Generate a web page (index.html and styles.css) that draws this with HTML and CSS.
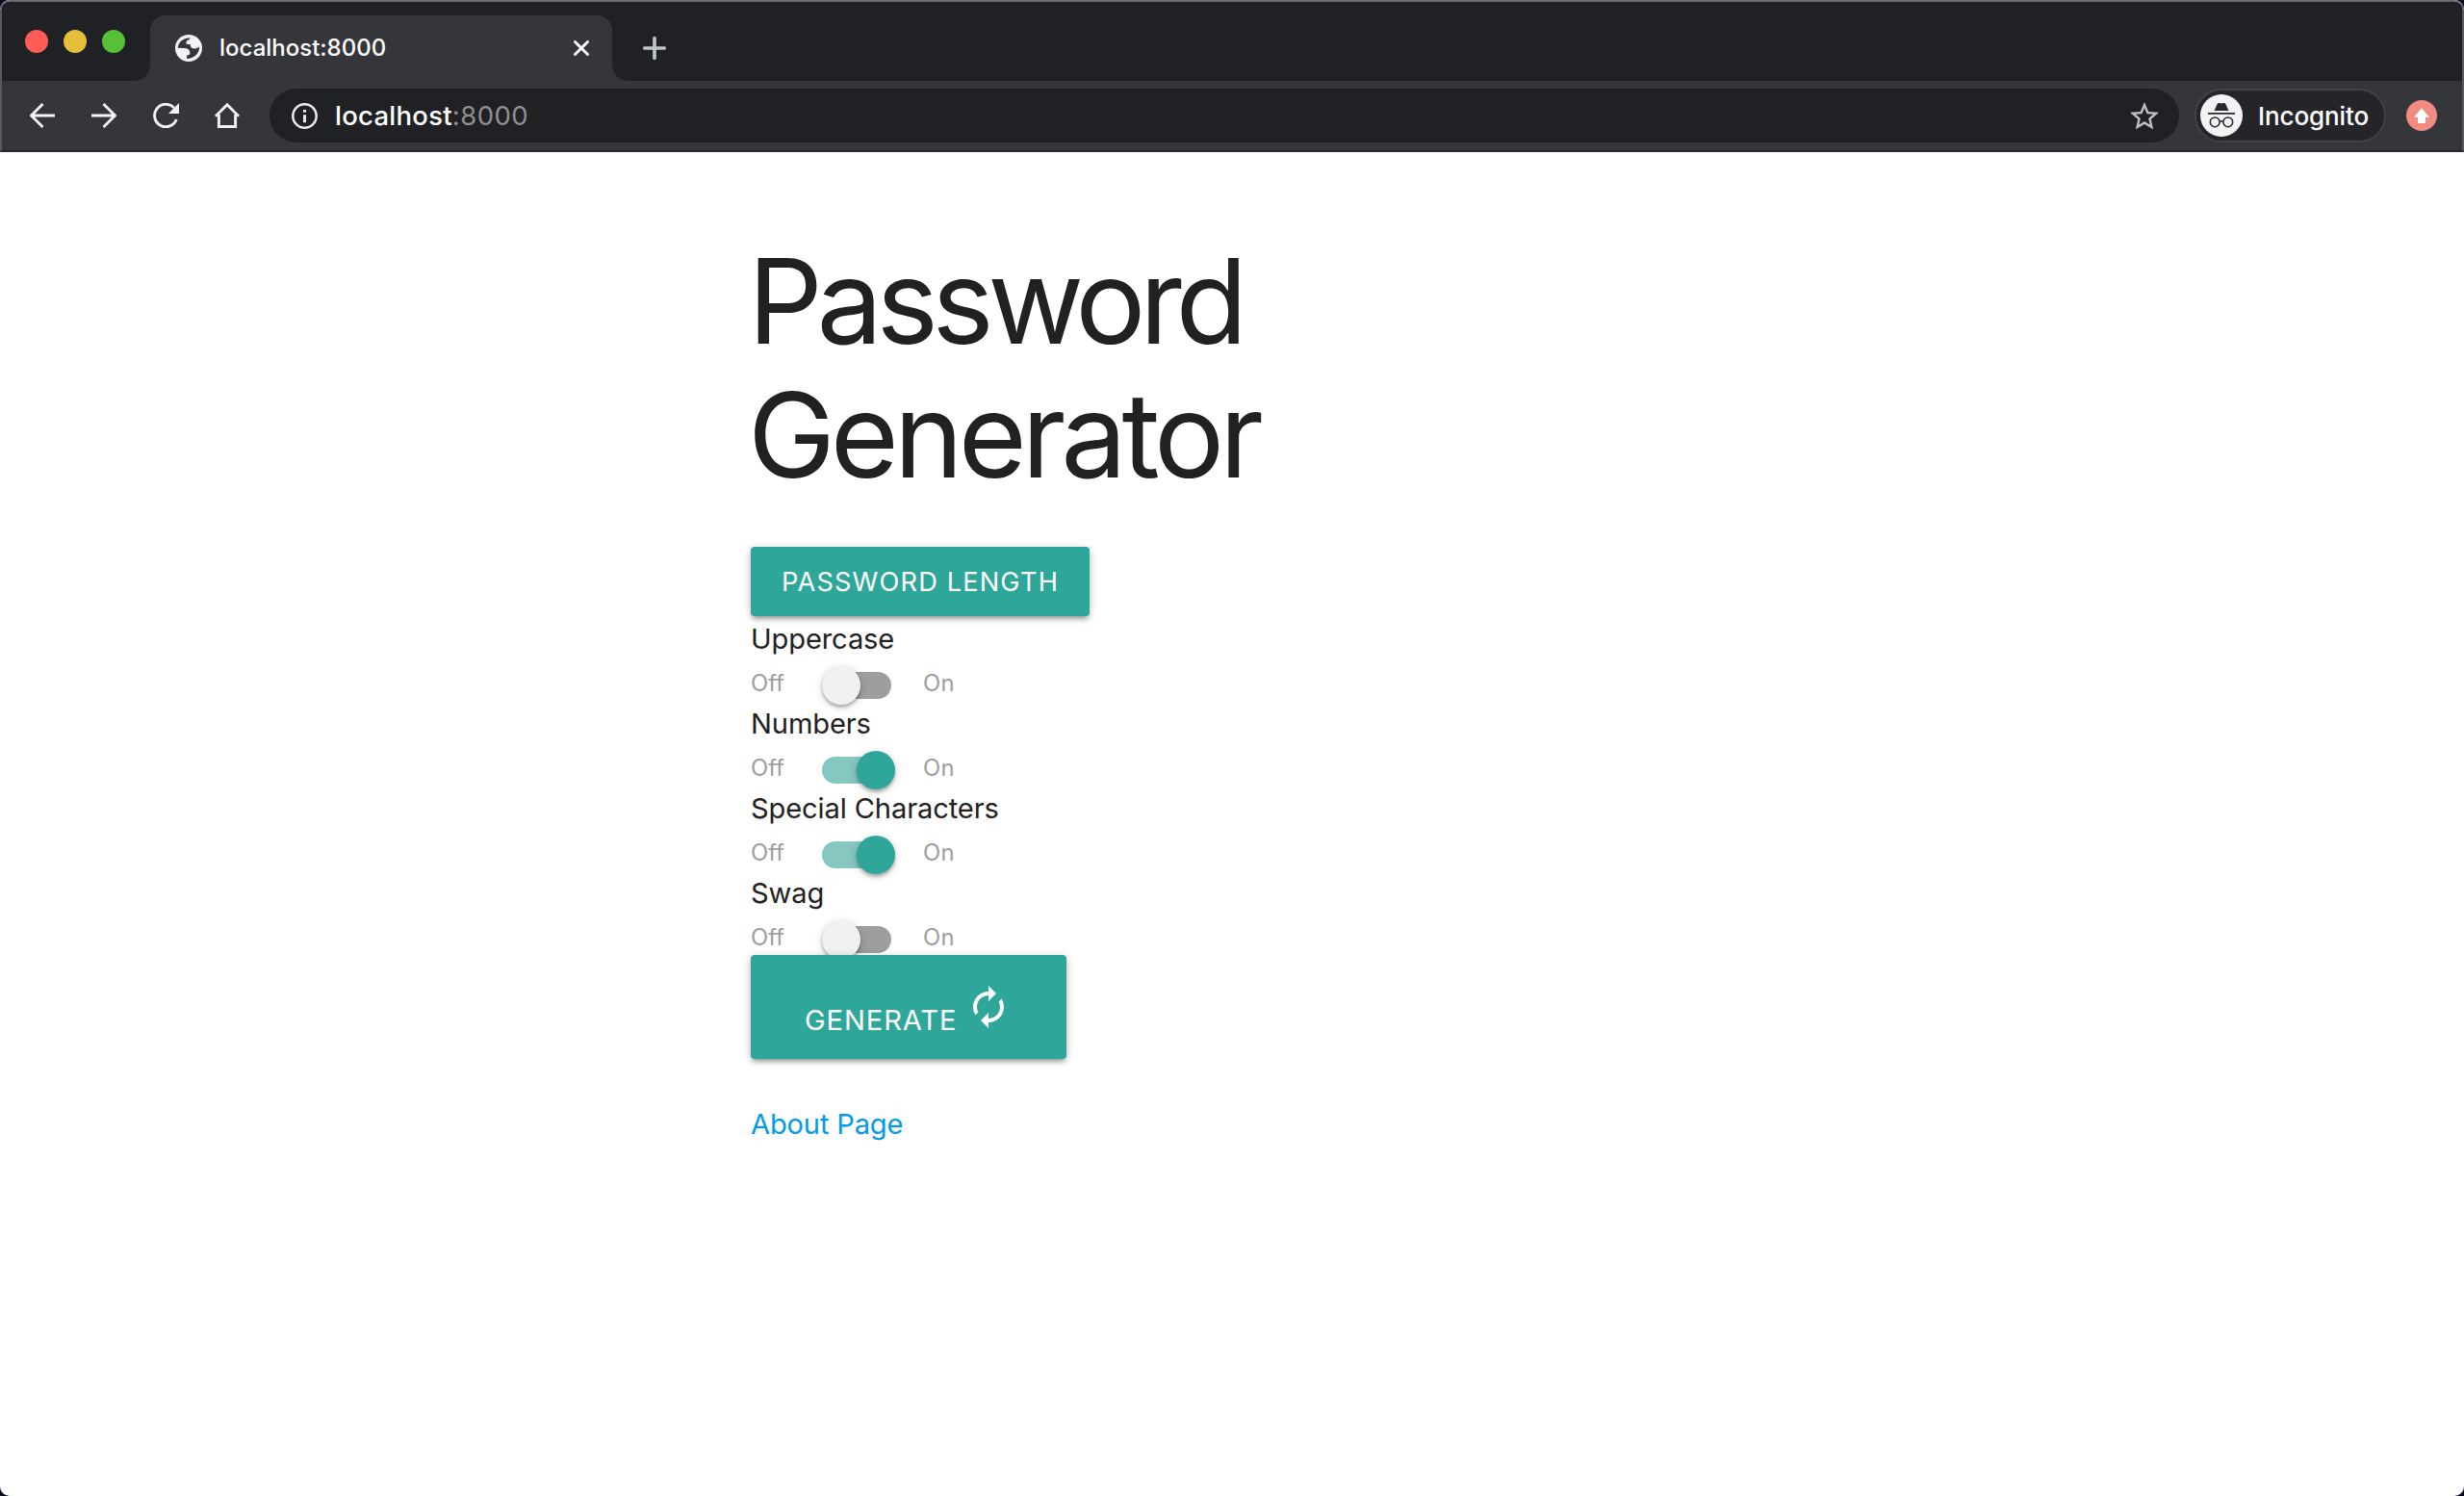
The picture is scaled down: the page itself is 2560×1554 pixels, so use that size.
FILE: index.html
```html
<!DOCTYPE html>
<html lang="en">
<head>
<meta charset="utf-8">
<title>Password Generator</title>
<link rel="stylesheet" href="styles.css">
</head>
<body>
<div class="window">
  <header class="chrome">
    <div class="tabstrip">
      <div class="lights">
        <span class="light light-red"></span>
        <span class="light light-yellow"></span>
        <span class="light light-green"></span>
      </div>
      <div class="tab">
        <svg class="globe" viewBox="0 0 28 28" width="28" height="28"><circle cx="14" cy="14" r="14" fill="#f1f3f4"/><path fill="#35363a" d="M2.800 13.800C2.900 8 8 3.500 15.800 3.200L14.500 5.200C12 5.600 11 7.300 11.600 9.800L15.800 10.300C15.600 13.400 17.600 14.600 20.400 14.600 22.400 14.600 23.500 13.800 25.200 12.600 25.400 19 20.500 24.800 12.200 25.100L11.900 21.600C14.800 21.500 15.700 20.400 15.300 18 14.900 15 12 14 9 14z"/></svg>
        <span class="tab-title">localhost:8000</span>
        <svg class="tab-close" viewBox="0 0 16 16" width="16" height="16"><path d="M1.500 1.500l13 13M14.500 1.500l-13 13" stroke="#fff" stroke-width="2.900" stroke-linecap="round"/></svg>
      </div>
      <svg class="new-tab" viewBox="0 0 24 24" width="24" height="24"><path d="M12 1.800v20.400M1.800 12h20.400" stroke="#c0c3c7" stroke-width="3.700" stroke-linecap="round"/></svg>
    </div>
    <div class="toolbar">
      <nav class="nav">
        <svg viewBox="0 0 26 26" width="26" height="26" fill="none" stroke="#f1f3f4" stroke-width="2.900"><path d="M26 13H2M13.500 1L1.500 13l12 12"/></svg>
        <svg viewBox="0 0 26 26" width="26" height="26" fill="none" stroke="#f1f3f4" stroke-width="2.900"><path d="M0 13h24M12.500 1l12 12-12 12"/></svg>
        <svg viewBox="0 0 27 26" width="27" height="26"><path d="M21.800 5A11.700 11.700 0 1 0 24.300 17" fill="none" stroke="#f1f3f4" stroke-width="2.900"/><path d="M27 0v11H16z" fill="#f1f3f4"/></svg>
        <svg class="home" viewBox="0 0 26 26" width="26" height="26" fill="none" stroke="#f1f3f4" stroke-width="2.900"><path d="M1 13.700L13 1.800l12 11.900M4.400 12v12.500h17.200V12"/></svg>
      </nav>
      <div class="omnibox">
        <svg class="info" viewBox="0 0 27 27" width="27" height="27"><circle cx="13.500" cy="13.500" r="12.200" fill="none" stroke="#e8eaed" stroke-width="2.500"/><path d="M12 7h3v2.800h-3zM12 12.200h3V20.200h-3z" fill="#e8eaed"/></svg>
        <span class="host">localhost</span><span class="port">:8000</span>
        <svg class="star" viewBox="2 2 20 19" width="30" height="28.500"><path fill="#bdbfc1" d="M22 9.240l-7.190-.620L12 2 9.190 8.630 2 9.240l5.460 4.730L5.820 21 12 17.270 18.180 21l-1.630-7.030L22 9.240zM12 15.400l-3.760 2.270 1-4.280-3.320-2.880 4.380-.380L12 6.100l1.710 4.040 4.380.380-3.320 2.880 1 4.280L12 15.400z"/></svg>
      </div>
      <div class="incognito">
        <svg viewBox="0 0 44 44" width="44" height="44"><circle cx="22" cy="22" r="22" fill="#f1f3f4"/><g fill="#27292d"><path d="M14.500 17l3.300-7.200c.500-1 1.300-1.100 2.200-.7 1.400.6 2.600.6 4 0 .9-.4 1.700-.3 2.200.7L29.500 17z"/><path d="M8 19h28v1.700H8z"/></g><g fill="none" stroke="#27292d" stroke-width="1.500"><circle cx="15.200" cy="28.800" r="4.900"/><circle cx="28.800" cy="28.800" r="4.900"/><path d="M20.100 28.300c1.200-.7 2.600-.7 3.800 0"/></g></svg>
        <span>Incognito</span>
      </div>
      <svg class="update" viewBox="0 0 32 32" width="32" height="32"><circle cx="16" cy="16" r="16" fill="#f28b82"/><path d="M16 8.300L24 17.700h-4V24h-8v-6.300H8z" fill="#fff"/></svg>
    </div>
  </header>
  <main class="page">
    <h1 class="title"><span class="title-top">Password</span><br><span class="title-bottom">Generator</span></h1>
    <button class="btn">Password Length</button>
    <section class="option">
      <div class="name">Uppercase</div>
      <div class="switch"><span>Off</span><i class="lever"></i><span>On</span></div>
    </section>
    <section class="option">
      <div class="name">Numbers</div>
      <div class="switch"><span>Off</span><i class="lever is-on"></i><span>On</span></div>
    </section>
    <section class="option">
      <div class="name">Special Characters</div>
      <div class="switch"><span>Off</span><i class="lever is-on"></i><span>On</span></div>
    </section>
    <section class="option">
      <div class="name">Swag</div>
      <div class="switch"><span>Off</span><i class="lever"></i><span>On</span></div>
    </section>
    <button class="btn btn-large"><span>Generate</span><svg viewBox="0 0 24 24" width="48" height="48"><path fill="#fff" d="M12 6v3l4-4-4-4v3c-4.420 0-8 3.580-8 8 0 1.570.460 3.030 1.240 4.260L6.700 14.800c-.450-.830-.700-1.790-.700-2.800 0-3.310 2.690-6 6-6zm6.760 1.740L17.300 9.200c.440.840.700 1.790.700 2.800 0 3.310-2.690 6-6 6v-3l-4 4 4 4v-3c4.420 0 8-3.580 8-8 0-1.570-.460-3.030-1.240-4.260z"/></svg></button>
    <a class="about" href="#">About Page</a>
  </main>
</div>
</body>
</html>
```
FILE: styles.css
```css
* { box-sizing: border-box; }
html { background: #070b1c; }
body {
  margin: 0;
  font-family: Inter, "Liberation Sans", sans-serif;
  color: #212121;
}
svg { display: block; flex: none; }

.window {
  height: 1554px;
  overflow: hidden;
  border-radius: 10px;
  background: #fff;
}

/* Browser chrome */
.chrome {
  height: 158px;
  background: #35363a;
  border: 2px solid #58595c;
  border-top-color: #6a6b6e;
  border-bottom: 2px solid #28292c;
  border-radius: 10px 10px 0 0;
  overflow: hidden;
}
.tabstrip {
  display: flex;
  align-items: flex-end;
  height: 82px;
  background: #202124;
}
.lights {
  display: flex;
  align-items: flex-start;
  gap: 16px;
  width: 154px;
  height: 82px;
  padding: 29px 0 0 24px;
}
.light {
  width: 24px;
  height: 24px;
  border-radius: 50%;
}
.light-red { background: #ff5c57; }
.light-yellow { background: #e5bf3c; }
.light-green { background: #57c038; }

.tab {
  position: relative;
  display: flex;
  align-items: center;
  width: 480px;
  height: 68px;
  padding: 0 24px 0 26px;
  border-radius: 16px 16px 0 0;
  background: #35363a;
}
.tab::before,
.tab::after {
  content: "";
  position: absolute;
  bottom: 0;
  width: 16px;
  height: 16px;
}
.tab::before { right: 100%; background: radial-gradient(circle at 0 0, #202124 15.500px, #35363a 16px); }
.tab::after { left: 100%; background: radial-gradient(circle at 100% 0, #202124 15.500px, #35363a 16px); }
.tab-title {
  flex: 1;
  margin-left: 18px;
  font-size: 24px;
  font-weight: 450;
  line-height: 30px;
  color: #fff;
}
.new-tab { margin: 0 0 22px 32px; }

.toolbar {
  display: flex;
  align-items: center;
  height: 72px;
}
.nav {
  display: flex;
  align-items: center;
  gap: 38px;
  width: 278px;
  padding-left: 29px;
}
.home { margin-left: -1px; }
.omnibox {
  display: flex;
  align-items: center;
  width: 1984px;
  height: 56px;
  padding: 0 21px 0 23px;
  border-radius: 28px;
  background: #202124;
  font-size: 27.500px;
  line-height: 34px;
}
.host { margin-left: 18px; font-weight: 450; letter-spacing: .250px; color: #fff; }
.port { letter-spacing: .450px; color: #8f9092; }
.star { margin-left: auto; }
.incognito {
  display: flex;
  align-items: center;
  width: 199px;
  height: 56px;
  margin-left: 16px;
  padding-left: 4px;
  border: 2px solid #414146;
  border-radius: 28px;
  background: #252529;
  font-size: 26px;
  font-weight: 450;
  line-height: 32px;
  letter-spacing: -.100px;
  color: #fff;
}
.incognito span { margin: 2px 0 0 16px; }
.update { margin-left: 21px; }

/* Page */
.page {
  display: flex;
  flex-direction: column;
  align-items: flex-start;
  padding: 86px 0 0 780px;
}
.title {
  margin: 0 0 46.800px -3px;
  font-size: 122px;
  font-weight: 400;
  line-height: 138.600px;
}
.title-top { letter-spacing: -6.500px; }
.title-bottom { letter-spacing: -5.200px; }

.btn {
  width: 352px;
  height: 72px;
  padding: 0 0 0 32px;
  border: 0;
  border-radius: 4px;
  background: #2fa69a;
  box-shadow: 0 4px 4px rgba(0,0,0,.14), 0 6px 2px -4px rgba(0,0,0,.12), 0 2px 10px rgba(0,0,0,.2);
  font: 27.200px/73px Inter, "Liberation Sans", sans-serif;
  letter-spacing: 1.150px;
  text-align: left;
  text-transform: uppercase;
  white-space: nowrap;
  color: #fff;
}

.option { height: 88px; }
.name {
  height: 45px;
  padding-top: 1px;
  font-size: 29.100px;
  line-height: 45px;
  letter-spacing: -.120px;
}
.switch {
  display: flex;
  height: 43px;
  font-size: 23.800px;
  line-height: 49px;
  color: #9e9e9e;
}
.switch span:first-child { width: 42px; }
.switch span:last-child { letter-spacing: .300px; }
.lever {
  position: relative;
  width: 72px;
  height: 28px;
  margin: 13px 33px 0 32px;
  border-radius: 14px;
  background: #9e9e9e;
}
.lever::after {
  content: "";
  position: absolute;
  top: -6px;
  left: 0;
  width: 40px;
  height: 40px;
  border-radius: 50%;
  background: #f1f1f1;
  box-shadow: 0 3px 3px rgba(0,0,0,.2), 0 2px 8px rgba(0,0,0,.2);
}
.lever.is-on { background: #86c7c1; }
.lever.is-on::after { left: 36px; background: #2fa69a; }

.btn-large {
  position: relative;
  display: flex;
  width: 328px;
  height: 108px;
  padding: 0 0 0 56px;
  font-size: 29.100px;
  letter-spacing: .900px;
}
.btn-large span { margin-top: 31px; }
.btn-large svg { margin: 30px 0 0 9px; }
.about {
  margin-top: 45px;
  font-size: 29.100px;
  line-height: 45px;
  letter-spacing: -.160px;
  color: #039be5;
  text-decoration: none;
}
```
